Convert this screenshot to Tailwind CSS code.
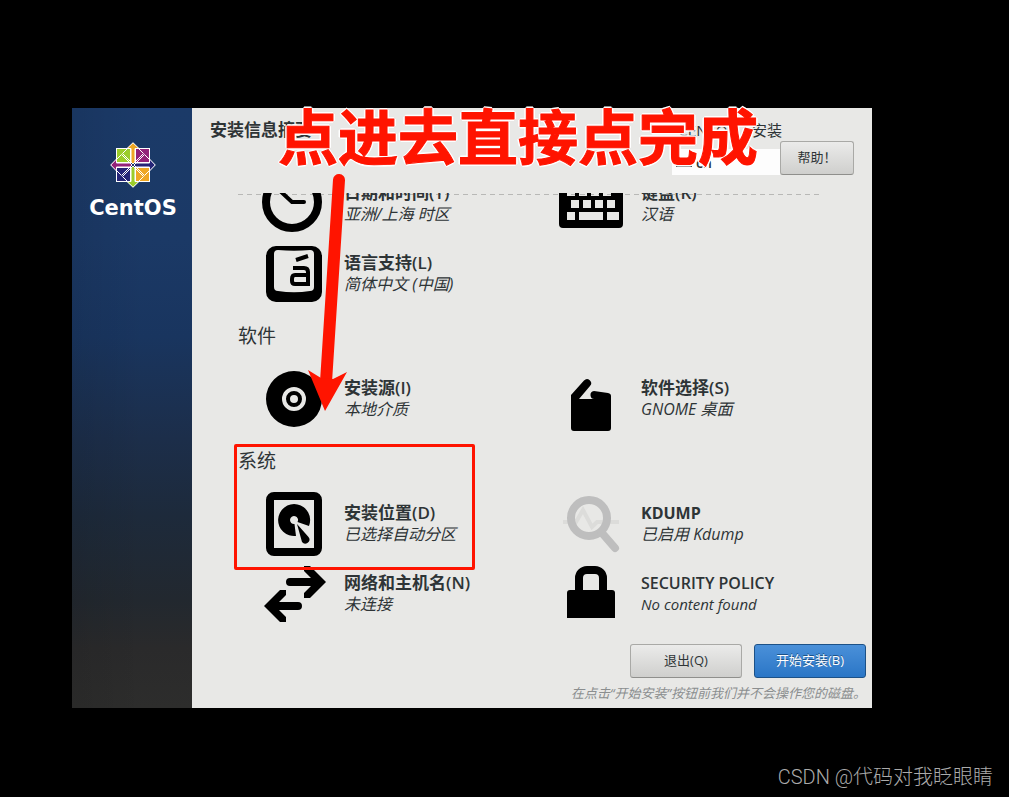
<!doctype html>
<html lang="zh-CN">
  <head>
    <meta charset="utf-8" />
    <meta name="viewport" content="width=device-width, initial-scale=1" />
    <title>安装信息摘要</title>
    <script src="https://cdn.jsdelivr.net/npm/@tailwindcss/browser@4"></script>
  </head>
  <body class="flex min-h-screen flex-col bg-black pt-[108px] font-['Open_Sans','Noto_Sans_CJK_SC',sans-serif] text-[#2e3436]">

    <!-- Installer window -->
    <div class="relative mr-[137px] ml-[72px] flex grow bg-[#e8e8e6]">

      <!-- Sidebar -->
      <aside class="w-[120px] shrink-0 bg-[linear-gradient(90deg,#00000014,#00000000_60%),linear-gradient(180deg,#1b3a68_0%,#1b3966_22%,#19355f_38%,#1c2e4a_55%,#1d2a3b_68%,#22282f_82%,#2a2a2b_90%,#2d2d2c_100%)] pt-[34px] pl-[2px]">
        <svg class="mx-auto size-[46px]" viewBox="-23 -23 46 46" stroke="#fff" aria-hidden="true">
          <rect x="-16.500" y="-16.500" width="14" height="14" fill="#9ccd2a" />
          <rect x="2.500" y="-16.500" width="14" height="14" fill="#932279" />
          <rect x="2.500" y="2.500" width="14" height="14" fill="#efa724" />
          <rect x="-16.500" y="2.500" width="14" height="14" fill="#262577" />
          <g fill="none">
            <path d="M0-22 10.500-11.500 0-1-10.500-11.500z" />
            <path d="M22 0 11.500 10.500 1 0 11.500-10.500z" />
            <path d="M0 22-10.500 11.500 0 1 10.500 11.500z" />
            <path d="M-22 0-11.500-10.500-1 0-11.500 10.500z" />
          </g>
          <path fill="#efa724" d="M0-22.300 6-16.500H2V-3L0-1-2-3V-16.500H-6z" />
          <path fill="#262577" d="M22.300 0 16.500 6V2H3L1 0 3-2H16.500V-6z" />
          <path fill="#9ccd2a" d="M0 22.300-6 16.500H-2V3L0 1 2 3V16.500H6z" />
          <path fill="#932279" d="M-22.300 0-16.500-6V-2H-3L-1 0-3 2H-16.500V6z" />
        </svg>
        <p class="mt-2 text-center font-['DejaVu_Sans'] text-[21px] leading-6 font-bold text-white">CentOS</p>
      </aside>

      <main class="flex min-w-0 grow flex-col">
        <header class="flex h-[85px] shrink-0 justify-between pr-[18px] pl-[18px]">
          <h1 class="pt-[11px] text-[17px] leading-[22px] font-semibold">安装信息摘要</h1>
          <div class="flex pt-[11px]">
            <div class="w-[108px]">
              <p class="-mr-[2px] flex justify-end text-[15px] leading-[22px] whitespace-nowrap">CENTOS 7 安装</p>
              <button class="mt-2 flex h-[26px] w-full items-center gap-1 bg-[#fdfdfd] pl-1 text-[14px] font-semibold">
                <svg class="h-3 w-4" viewBox="0 0 16 12" fill="currentColor" aria-hidden="true">
                  <path fill-rule="evenodd" d="M0 1h16v10H0zM2 3v2h2V3zm4 0v2h2V3zm4 0v2h4V3zM2 7v2h12V7z" />
                </svg>
                cn
              </button>
            </div>
            <button class="mt-[22px] h-[34px] w-[74px] rounded-[3px] border border-[#a9a9a6] border-b-[#8f8f8c] bg-linear-to-b from-[#ebebea] to-[#cfcfcd] text-[13px]">帮助！</button>
          </div>
        </header>

        <!-- Summary list, scrolled down a little -->
        <div class="relative mr-4 ml-[46px] grow overflow-hidden">
          <div class="absolute top-px right-[34px] left-0 h-px bg-[repeating-linear-gradient(90deg,#b8b8b6_0_5px,transparent_5px_9px)]"></div>
          <div class="relative -mt-[21px]">

            <section class="grid grid-cols-2 gap-y-[6px] pl-6">
              <button class="flex h-16 gap-[18px] text-left">
                <svg class="size-16 shrink-0 text-black" viewBox="0 0 64 64" fill="none" stroke="currentColor" aria-hidden="true">
                  <circle cx="30" cy="30" r="26" stroke-width="8" />
                  <path d="M16 17l14 13h12" stroke-width="4" stroke-linecap="round" />
                </svg>
                <span class="pt-[10px] text-[16px] leading-[21px]">
                  <b class="block text-[17px] leading-[22px] font-semibold">日期和时间(T)</b>
                  <i class="block">亚洲/上海 时区</i>
                </span>
              </button>
              <button class="flex h-16 gap-[18px] text-left">
                <svg class="size-16 shrink-0 text-black" viewBox="0 0 64 64" fill="currentColor" aria-hidden="true">
                  <path fill-rule="evenodd" d="M4 8h56a4 4 0 0 1 4 4v40a4 4 0 0 1-4 4H4a4 4 0 0 1-4-4V12a4 4 0 0 1 4-4zM8 16v8h8v-8zm12 0v8h8v-8zm12 0v8h8v-8zm12 0v8h8v-8zM12 28v8h8v-8zm12 0v8h8v-8zm12 0v8h8v-8zm12 0v8h8v-8zM8 40v8h8v-8zm12 0v8h24v-8zm28 0v8h12v-8z" />
                </svg>
                <span class="pt-[10px] text-[16px] leading-[21px]">
                  <b class="block text-[17px] leading-[22px] font-semibold">键盘(K)</b>
                  <i class="block">汉语</i>
                </span>
              </button>
              <button class="flex h-16 gap-[18px] text-left">
                <svg class="size-16 shrink-0 text-black" viewBox="0 0 64 64" fill="none" aria-hidden="true">
                  <path fill="currentColor" fill-rule="evenodd" d="M14 4h36a10 10 0 0 1 10 10v36a10 10 0 0 1-10 10H14a10 10 0 0 1-10-10V14a10 10 0 0 1 10-10zM16 8q-4 0-4 4v33q0 4 4 4 16 2.500 32 0 4 0 4-4V12q0-4-4-4-16 1.500-32 0z" />
                  <path stroke="currentColor" stroke-width="4" d="M31 26h11q4 0 4 4v12H33q-3 0-3-3v-2q0-4 3-4h13M34 18l12-4" />
                </svg>
                <span class="pt-[10px] text-[16px] leading-[21px]">
                  <b class="block text-[17px] leading-[22px] font-semibold">语言支持(L)</b>
                  <i class="block">简体中文 (中国)</i>
                </span>
              </button>
            </section>

            <h2 class="mt-[18px] mb-[19px] text-[19px] leading-6">软件</h2>
            <section class="grid grid-cols-2 gap-y-[6px] pl-6">
              <button class="flex h-16 gap-[18px] text-left">
                <svg class="size-16 shrink-0 text-black" viewBox="0 0 64 64" fill="currentColor" aria-hidden="true">
                  <path fill-rule="evenodd" d="M32 4a28 28 0 1 0 0 56 28 28 0 1 0 0-56zm0 16a12 12 0 1 1 0 24 12 12 0 1 1 0-24zm0 4a8 8 0 1 0 0 16 8 8 0 1 0 0-16zm0 4a4 4 0 1 1 0 8 4 4 0 1 1 0-8z" />
                </svg>
                <span class="pt-[10px] text-[16px] leading-[21px]">
                  <b class="block text-[17px] leading-[22px] font-semibold">安装源(I)</b>
                  <i class="block">本地介质</i>
                </span>
              </button>
              <button class="flex h-16 gap-[18px] text-left">
                <svg class="size-16 shrink-0 text-black" viewBox="0 0 64 64" fill="currentColor" aria-hidden="true">
                  <path d="M12 28 25 13.500a4 4 0 0 1 6 5.500L20 32h16a4 4 0 0 1-1-8l14 2q3 .5 3 3v32a3 3 0 0 1-3 3H15a3 3 0 0 1-3-3z" />
                </svg>
                <span class="pt-[10px] text-[16px] leading-[21px]">
                  <b class="block text-[17px] leading-[22px] font-semibold">软件选择(S)</b>
                  <i class="block">GNOME 桌面</i>
                </span>
              </button>
            </section>

            <h2 class="mt-[18px] mb-[19px] text-[19px] leading-6">系统</h2>
            <section class="grid grid-cols-2 gap-y-[6px] pl-6">
              <button class="flex h-16 gap-[18px] text-left">
                <svg class="size-16 shrink-0 text-black" viewBox="0 0 64 64" fill="currentColor" aria-hidden="true">
                  <rect x="8" y="4" width="48" height="56" rx="4" fill="none" stroke="currentColor" stroke-width="8" />
                  <path fill-rule="evenodd" d="M34 44a16 16 0 1 1 13-10L35.500 30a4 4 0 1 0-3 2z" />
                  <path d="M35 32l11.500 13a4 4 0 0 1-6.500 5z" />
                </svg>
                <span class="pt-[10px] text-[16px] leading-[21px]">
                  <b class="block text-[17px] leading-[22px] font-semibold">安装位置(D)</b>
                  <i class="block">已选择自动分区</i>
                </span>
              </button>
              <button class="flex h-16 gap-[18px] text-left">
                <svg class="size-16 shrink-0" viewBox="0 0 64 64" fill="none" aria-hidden="true">
                  <path stroke="#dcdcda" stroke-width="4" d="M4 30h13l7-12 9 17 5-5h22" />
                  <circle cx="30" cy="26" r="18" stroke="#bebebe" stroke-width="8" />
                  <path stroke="#bebebe" stroke-width="8" stroke-linecap="round" d="M43 41l13 15" />
                </svg>
                <span class="pt-[10px] text-[16px] leading-[21px]">
                  <b class="block leading-[22px] font-bold">KDUMP</b>
                  <i class="block">已启用 Kdump</i>
                </span>
              </button>
              <button class="flex h-16 gap-[18px] text-left">
                <svg class="size-16 shrink-0 text-black" viewBox="0 0 64 64" fill="currentColor" aria-hidden="true">
                  <path d="M42 4h6l16 16-16 16h-6v-5l7-7H28a4 4 0 0 1 0-8h21l-7-7z" />
                  <path d="M24 28h-6L2 44l16 16h6v-5l-7-7h19a4 4 0 0 0 0-8H17l7-7z" />
                </svg>
                <span class="pt-[10px] text-[16px] leading-[21px]">
                  <b class="block text-[17px] leading-[22px] font-semibold">网络和主机名(N)</b>
                  <i class="block">未连接</i>
                </span>
              </button>
              <button class="flex h-16 gap-[18px] text-left">
                <svg class="size-16 shrink-0 text-black" viewBox="0 0 64 64" fill="currentColor" aria-hidden="true">
                  <path d="M11 28h42a3 3 0 0 1 3 3v25H8V31a3 3 0 0 1 3-3z" />
                  <path fill="none" stroke="currentColor" stroke-width="8" d="M20 30V16a8 8 0 0 1 8-8h8a8 8 0 0 1 8 8v14" />
                </svg>
                <span class="pt-[10px] text-[16px] leading-[21px]">
                  <b class="block leading-[22px] font-semibold">SECURITY POLICY</b>
                  <i class="block text-[15px]">No content found</i>
                </span>
              </button>
            </section>
          </div>
        </div>

        <footer class="shrink-0 pt-[10px] pr-[6px] pb-[5px]">
          <div class="flex justify-end gap-3">
            <button class="h-[34px] w-28 rounded-[3px] border border-[#a9a9a6] border-b-[#8f8f8c] bg-linear-to-b from-[#ebebea] to-[#cfcfcd] text-[13px]">退出(Q)</button>
            <button class="h-[34px] w-28 rounded-[3px] border border-[#1c5187] bg-linear-to-b from-[#4a90d9] to-[#2a76c6] text-[13px] text-white text-shadow-[0_-1px_0_#1c5187]">开始安装(B)</button>
          </div>
          <p class="mt-[5px] text-right text-[13px] leading-5 text-[#8b8e8f] italic">在点击“开始安装”按钮前我们并不会操作您的磁盘。</p>
        </footer>
      </main>

      <!-- Red annotations over the window -->
      <p class="pointer-events-none absolute -top-[9px] left-[206px] text-[60px] leading-[76px] font-bold whitespace-nowrap text-[#ff1400] [-webkit-text-stroke:1px_#ff1400] text-shadow-[2px_0_0_#fff,-2px_0_0_#fff,0_2px_0_#fff,0_-2px_0_#fff,1px_1px_0_#fff,-1px_1px_0_#fff,1px_-1px_0_#fff,-1px_-1px_0_#fff]">点进去直接点完成</p>
      <svg class="pointer-events-none absolute top-[64px] left-[234px] h-[240px] w-[44px]" viewBox="0 0 44 240" aria-hidden="true">
        <path d="M33 8 20 210" stroke="#ff1400" stroke-width="12" stroke-linecap="round" />
        <path fill="#ff1400" d="M2 198l13 8 12 1 14-7-22 39z" />
      </svg>
      <div class="pointer-events-none absolute top-[336px] left-[162px] h-[126px] w-[241px] rounded-[2px] border-3 border-[#ff1400]"></div>
    </div>

    <p class="flex h-[89px] items-end justify-end pr-4 pb-[6px] font-['Roboto','Noto_Sans_CJK_SC',sans-serif] text-[20px] leading-7 font-light text-[#ababab]">CSDN @代码对我眨眼睛</p>
  </body>
</html>
